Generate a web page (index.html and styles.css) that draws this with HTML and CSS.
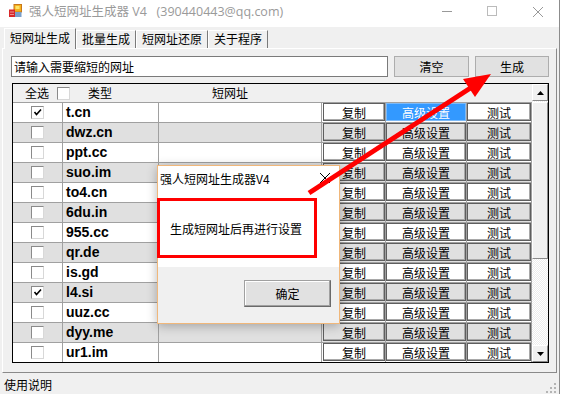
FILE: index.html
```html
<!DOCTYPE html>
<html lang="zh-CN">
<head>
    <meta charset="UTF-8">
    <title>强人短网址生成器 V4</title>
    <link rel="stylesheet" href="styles.css">
</head>
<body>
    <div class="window">
        <div class="titlebar">
            <svg class="app-icon" width="13" height="13" viewBox="0 0 13 13">
                <rect x="5" y="0.5" width="7.5" height="7.5" fill="#f6b21c" stroke="#c8781a" stroke-width="1"/>
                <rect x="6.5" y="2" width="4" height="3" fill="#fde46a"/>
                <rect x="6" y="8" width="6.5" height="5" fill="#7b9fc9"/>
                <rect x="0" y="5.5" width="6" height="7.5" fill="#d8282a"/>
                <rect x="1.5" y="7.5" width="1" height="1" fill="#fff"/>
                <rect x="3.5" y="7.5" width="1" height="1" fill="#fff"/>
                <rect x="1.5" y="10" width="1" height="1" fill="#fff"/>
                <rect x="3.5" y="10" width="1" height="1" fill="#fff"/>
            </svg>
            <span class="title">强人短网址生成器 V4   (390440443@qq.com)</span>
            <svg class="win-controls" width="120" height="27" viewBox="0 0 120 27">
                <line x1="4" y1="11.5" x2="14" y2="11.5" stroke="#999" stroke-width="1"/>
                <rect x="49.5" y="6.5" width="9" height="9" fill="none" stroke="#bbb" stroke-width="1"/>
                <line x1="95" y1="7" x2="105" y2="17" stroke="#999" stroke-width="1"/>
                <line x1="105" y1="7" x2="95" y2="17" stroke="#999" stroke-width="1"/>
            </svg>
        </div>

        <div class="tabs">
            <div class="tab active">短网址生成</div>
            <div class="tab">批量生成</div>
            <div class="tab">短网址还原</div>
            <div class="tab">关于程序</div>
        </div>

        <div class="panel">
            <div class="toolbar">
                <input class="url-input" type="text" value="请输入需要缩短的网址">
                <button class="btn">清空</button>
                <button class="btn btn-go">生成</button>
            </div>

            <div class="grid">
                <div class="table">
                    <div class="grid-head">
                        <span class="h-all">全选</span>
                        <span class="chk h-chk"></span>
                        <span class="h-type">类型</span>
                        <span class="h-url">短网址</span>
                    </div>

                    <div class="row">
                        <div class="c1"><span class="chk"><svg width="9" height="9" viewBox="0 0 9 9"><polyline points="1.5,4 3.5,6.5 8,1.5" fill="none" stroke="#000" stroke-width="1.6"/></svg></span></div>
                        <div class="c2">t.cn</div>
                        <div class="c3"></div>
                        <div class="c4"><button class="cell-btn">复制</button></div>
                        <div class="c5"><button class="cell-btn selected">高级设置</button></div>
                        <div class="c6"><button class="cell-btn">测试</button></div>
                    </div>
                    <div class="row alt">
                        <div class="c1"><span class="chk"></span></div>
                        <div class="c2">dwz.cn</div>
                        <div class="c3"></div>
                        <div class="c4"><button class="cell-btn">复制</button></div>
                        <div class="c5"><button class="cell-btn">高级设置</button></div>
                        <div class="c6"><button class="cell-btn">测试</button></div>
                    </div>
                    <div class="row">
                        <div class="c1"><span class="chk"></span></div>
                        <div class="c2">ppt.cc</div>
                        <div class="c3"></div>
                        <div class="c4"><button class="cell-btn">复制</button></div>
                        <div class="c5"><button class="cell-btn">高级设置</button></div>
                        <div class="c6"><button class="cell-btn">测试</button></div>
                    </div>
                    <div class="row alt">
                        <div class="c1"><span class="chk"></span></div>
                        <div class="c2">suo.im</div>
                        <div class="c3"></div>
                        <div class="c4"><button class="cell-btn">复制</button></div>
                        <div class="c5"><button class="cell-btn">高级设置</button></div>
                        <div class="c6"><button class="cell-btn">测试</button></div>
                    </div>
                    <div class="row">
                        <div class="c1"><span class="chk"></span></div>
                        <div class="c2">to4.cn</div>
                        <div class="c3"></div>
                        <div class="c4"><button class="cell-btn">复制</button></div>
                        <div class="c5"><button class="cell-btn">高级设置</button></div>
                        <div class="c6"><button class="cell-btn">测试</button></div>
                    </div>
                    <div class="row alt">
                        <div class="c1"><span class="chk"></span></div>
                        <div class="c2">6du.in</div>
                        <div class="c3"></div>
                        <div class="c4"><button class="cell-btn">复制</button></div>
                        <div class="c5"><button class="cell-btn">高级设置</button></div>
                        <div class="c6"><button class="cell-btn">测试</button></div>
                    </div>
                    <div class="row">
                        <div class="c1"><span class="chk"></span></div>
                        <div class="c2">955.cc</div>
                        <div class="c3"></div>
                        <div class="c4"><button class="cell-btn">复制</button></div>
                        <div class="c5"><button class="cell-btn">高级设置</button></div>
                        <div class="c6"><button class="cell-btn">测试</button></div>
                    </div>
                    <div class="row alt">
                        <div class="c1"><span class="chk"></span></div>
                        <div class="c2">qr.de</div>
                        <div class="c3"></div>
                        <div class="c4"><button class="cell-btn">复制</button></div>
                        <div class="c5"><button class="cell-btn">高级设置</button></div>
                        <div class="c6"><button class="cell-btn">测试</button></div>
                    </div>
                    <div class="row">
                        <div class="c1"><span class="chk"></span></div>
                        <div class="c2">is.gd</div>
                        <div class="c3"></div>
                        <div class="c4"><button class="cell-btn">复制</button></div>
                        <div class="c5"><button class="cell-btn">高级设置</button></div>
                        <div class="c6"><button class="cell-btn">测试</button></div>
                    </div>
                    <div class="row alt">
                        <div class="c1"><span class="chk"><svg width="9" height="9" viewBox="0 0 9 9"><polyline points="1.5,4 3.5,6.5 8,1.5" fill="none" stroke="#000" stroke-width="1.6"/></svg></span></div>
                        <div class="c2">l4.si</div>
                        <div class="c3"></div>
                        <div class="c4"><button class="cell-btn">复制</button></div>
                        <div class="c5"><button class="cell-btn">高级设置</button></div>
                        <div class="c6"><button class="cell-btn">测试</button></div>
                    </div>
                    <div class="row">
                        <div class="c1"><span class="chk"></span></div>
                        <div class="c2">uuz.cc</div>
                        <div class="c3"></div>
                        <div class="c4"><button class="cell-btn">复制</button></div>
                        <div class="c5"><button class="cell-btn">高级设置</button></div>
                        <div class="c6"><button class="cell-btn">测试</button></div>
                    </div>
                    <div class="row alt">
                        <div class="c1"><span class="chk"></span></div>
                        <div class="c2">dyy.me</div>
                        <div class="c3"></div>
                        <div class="c4"><button class="cell-btn">复制</button></div>
                        <div class="c5"><button class="cell-btn">高级设置</button></div>
                        <div class="c6"><button class="cell-btn">测试</button></div>
                    </div>
                    <div class="row">
                        <div class="c1"><span class="chk"></span></div>
                        <div class="c2">ur1.im</div>
                        <div class="c3"></div>
                        <div class="c4"><button class="cell-btn">复制</button></div>
                        <div class="c5"><button class="cell-btn">高级设置</button></div>
                        <div class="c6"><button class="cell-btn">测试</button></div>
                    </div>
                </div>

                <div class="vscroll">
                    <div class="sb-btn"><svg width="7" height="4" viewBox="0 0 7 4"><polygon points="3.5,0 7,4 0,4" fill="#000"/></svg></div>
                    <div class="sb-thumb"></div>
                    <div class="sb-track"></div>
                    <div class="sb-btn"><svg width="7" height="4" viewBox="0 0 7 4"><polygon points="0,0 7,0 3.5,4" fill="#000"/></svg></div>
                </div>
            </div>
        </div>

        <div class="statusbar">
            <span>使用说明</span>
            <svg class="grip" width="10" height="10" viewBox="0 0 10 10">
                <rect x="8" y="0" width="2" height="2" fill="#b4b4b4"/>
                <rect x="4" y="4" width="2" height="2" fill="#b4b4b4"/>
                <rect x="8" y="4" width="2" height="2" fill="#b4b4b4"/>
                <rect x="0" y="8" width="2" height="2" fill="#b4b4b4"/>
                <rect x="4" y="8" width="2" height="2" fill="#b4b4b4"/>
                <rect x="8" y="8" width="2" height="2" fill="#b4b4b4"/>
            </svg>
        </div>
    </div>

    <!-- message box opened over the main form -->
    <div class="dialog">
        <div class="dlg-title">
            <span>强人短网址生成器V4</span>
            <svg class="dlg-close" width="10" height="10" viewBox="0 0 10 10">
                <line x1="0" y1="0" x2="10" y2="10" stroke="#000" stroke-width="1"/>
                <line x1="10" y1="0" x2="0" y2="10" stroke="#000" stroke-width="1"/>
            </svg>
        </div>
        <div class="dlg-body">
            <div class="dlg-note">生成短网址后再进行设置</div>
        </div>
        <div class="dlg-foot">
            <button class="dlg-btn">确定</button>
        </div>
    </div>

    <svg class="arrow" width="565" height="394" viewBox="0 0 565 394">
        <line x1="309" y1="193" x2="472" y2="87" stroke="#f00" stroke-width="5"/>
        <polygon points="491,74 475,97 463,79" fill="#f00"/>
    </svg>
</body>
</html>
```

FILE: styles.css
```css
* {
    box-sizing: border-box;
}
body {
    margin: 0;
    width: 565px;
    height: 394px;
    overflow: hidden;
    position: relative;
    background: #fff;
    font-family: "Noto Sans CJK SC", sans-serif;
    font-size: 12px;
    color: #000;
}
button, input {
    font-family: "Noto Sans CJK SC", sans-serif;
    font-size: 12px;
    color: #000;
}

.window {
    width: 560px;
    height: 394px;
    background: #f0f0f0;
    border-right: 1px solid #8c8c8c;
    display: flex;
    flex-direction: column;
}
.titlebar {
    height: 27px;
    flex: none;
    background: #fff;
    display: flex;
    align-items: flex-start;
}
.app-icon {
    margin: 4px 7px 0 9px;
}
.title {
    line-height: 24px;
    font-family: "Open Sans", "Noto Sans CJK SC", sans-serif;
    font-size: 12.5px;
    color: #9a9a9a;
    white-space: pre;
}
.win-controls {
    margin-left: auto;
    margin-right: 1px;
}

.tabs {
    height: 21px;
    flex: none;
    display: flex;
    align-items: flex-end;
    padding-left: 4px;
}
.tab {
    height: 18px;
    padding: 0 5px;
    line-height: 16px;
    border: 1px solid #fff;
    border-right-color: #7a7a7a;
    border-bottom: none;
}
.tab.active {
    height: 21px;
    line-height: 18px;
    margin-bottom: -1px;
    position: relative;
    z-index: 1;
    background: #f0f0f0;
}

.panel {
    margin-left: 2px;
    width: 555px;
    height: 325px;
    flex: none;
    border: 1px solid #fff;
    border-right-color: #8a8a8a;
    border-bottom-color: #8a8a8a;
    padding: 7px 0 0 8px;
}
.toolbar {
    display: flex;
    gap: 6px;
    height: 21px;
}
.url-input {
    width: 377px;
    height: 21px;
    border: 1px solid #7a7a7a;
    background: #fff;
    padding: 0 2px;
    outline: none;
}
.btn {
    width: 75px;
    height: 21px;
    padding: 0;
    background: #e1e1e1;
    border: 1px solid #adadad;
}
.btn-go {
    width: 74px;
}

.grid {
    margin: 6px 0 0 1px;
    width: 537px;
    height: 280px;
    border: 1px solid #000;
    background: #fff;
    display: flex;
    overflow: hidden;
}
.table {
    width: 519px;
    flex: none;
}
.grid-head {
    height: 19px;
    background: #f0f0f0;
    border-bottom: 1px solid #a0a0a0;
    display: flex;
    align-items: center;
    line-height: 18px;
}
.h-all {
    margin-left: 12px;
}
.h-chk {
    margin-left: 8px;
}
.h-type {
    margin-left: 18px;
}
.h-url {
    margin-left: 100px;
}

.chk {
    width: 13px;
    height: 13px;
    background: #fff;
    border: 1px solid #8a8a8a;
    border-right-color: #d8d8d8;
    border-bottom-color: #d8d8d8;
    display: flex;
    align-items: center;
    justify-content: center;
}

.row {
    height: 20px;
    display: flex;
    border-bottom: 1px solid #a0a0a0;
    background: #fff;
}
.row.alt {
    background: #e0e0e0;
}
.row > div {
    height: 19px;
    border-right: 1px solid #a0a0a0;
}
.c1 {
    width: 50px;
    display: flex;
    align-items: center;
    justify-content: center;
}
.c2 {
    width: 96px;
    padding-left: 3px;
    font-family: "Liberation Sans", Arial, sans-serif;
    font-weight: bold;
    font-size: 14px;
    line-height: 19px;
}
.c3 {
    width: 163px;
}
.c4 {
    width: 64px;
    padding: 0 0 1px 1px;
}
.c5 {
    width: 81px;
    padding-bottom: 1px;
}
.c6 {
    width: 65px;
    padding-bottom: 1px;
}
.cell-btn {
    width: 100%;
    height: 100%;
    padding: 0;
    line-height: 15px;
    background: inherit;
    border: 1px solid #5e5e5e;
    box-shadow: inset -1px -1px 0 #a8a8a8;
}
.row .cell-btn {
    background: transparent;
}
.cell-btn.selected,
.row .cell-btn.selected {
    background: #3399ff;
    color: #fff;
    border-color: #7cbaf8;
    box-shadow: none;
}

.vscroll {
    width: 16px;
    flex: none;
    display: flex;
    flex-direction: column;
    background-color: #fff;
    background-image: repeating-conic-gradient(#ececec 0 25%, #fff 0 50%);
    background-size: 2px 2px;
}
.sb-btn {
    height: 17px;
    flex: none;
    background: #f0f0f0;
    border: 1px solid #fff;
    border-right-color: #8a8a8a;
    border-bottom-color: #8a8a8a;
    display: flex;
    align-items: center;
    justify-content: center;
}
.sb-thumb {
    height: 157px;
    flex: none;
    margin-top: 1px;
    background: #f0f0f0;
    border: 1px solid #fff;
    border-right-color: #8a8a8a;
    border-bottom-color: #8a8a8a;
}
.sb-track {
    flex: 1;
}

.statusbar {
    flex: 1;
    display: flex;
    padding: 2px 0 0 4px;
    line-height: 20px;
}
.grip {
    margin: auto 3px 2px auto;
}

.dialog {
    position: absolute;
    left: 157px;
    top: 165px;
    width: 183px;
    height: 159px;
    background: #fff;
    border: 1px solid #f0b77a;
    box-shadow: 0 2px 10px rgba(0, 0, 0, 0.28);
    display: flex;
    flex-direction: column;
    z-index: 5;
}
.dlg-title {
    height: 24px;
    flex: none;
    display: flex;
    align-items: center;
    padding-left: 2px;
}
.dlg-close {
    margin-left: auto;
    margin-right: 9px;
}
.dlg-body {
    height: 77px;
    flex: none;
    padding-top: 8px;
}
.dlg-note {
    width: 160px;
    height: 60px;
    margin-left: -1px;
    border: 3px solid #f00;
    display: flex;
    align-items: center;
    padding-left: 10px;
}
.dlg-foot {
    flex: 1;
    background: #f0f0f0;
    display: flex;
    justify-content: flex-end;
    align-items: flex-start;
    padding: 13px 8px 0 0;
}
.dlg-btn {
    width: 87px;
    height: 27px;
    padding: 0;
    background: #e1e1e1;
    border: 1px solid #a0a0a0;
    border-right-color: #6a6a6a;
    border-bottom-color: #6a6a6a;
    box-shadow: inset -1px -1px 0 #a0a0a0, inset 1px 1px 0 #fff;
}

.arrow {
    position: absolute;
    left: 0;
    top: 0;
    z-index: 10;
    pointer-events: none;
}
```
